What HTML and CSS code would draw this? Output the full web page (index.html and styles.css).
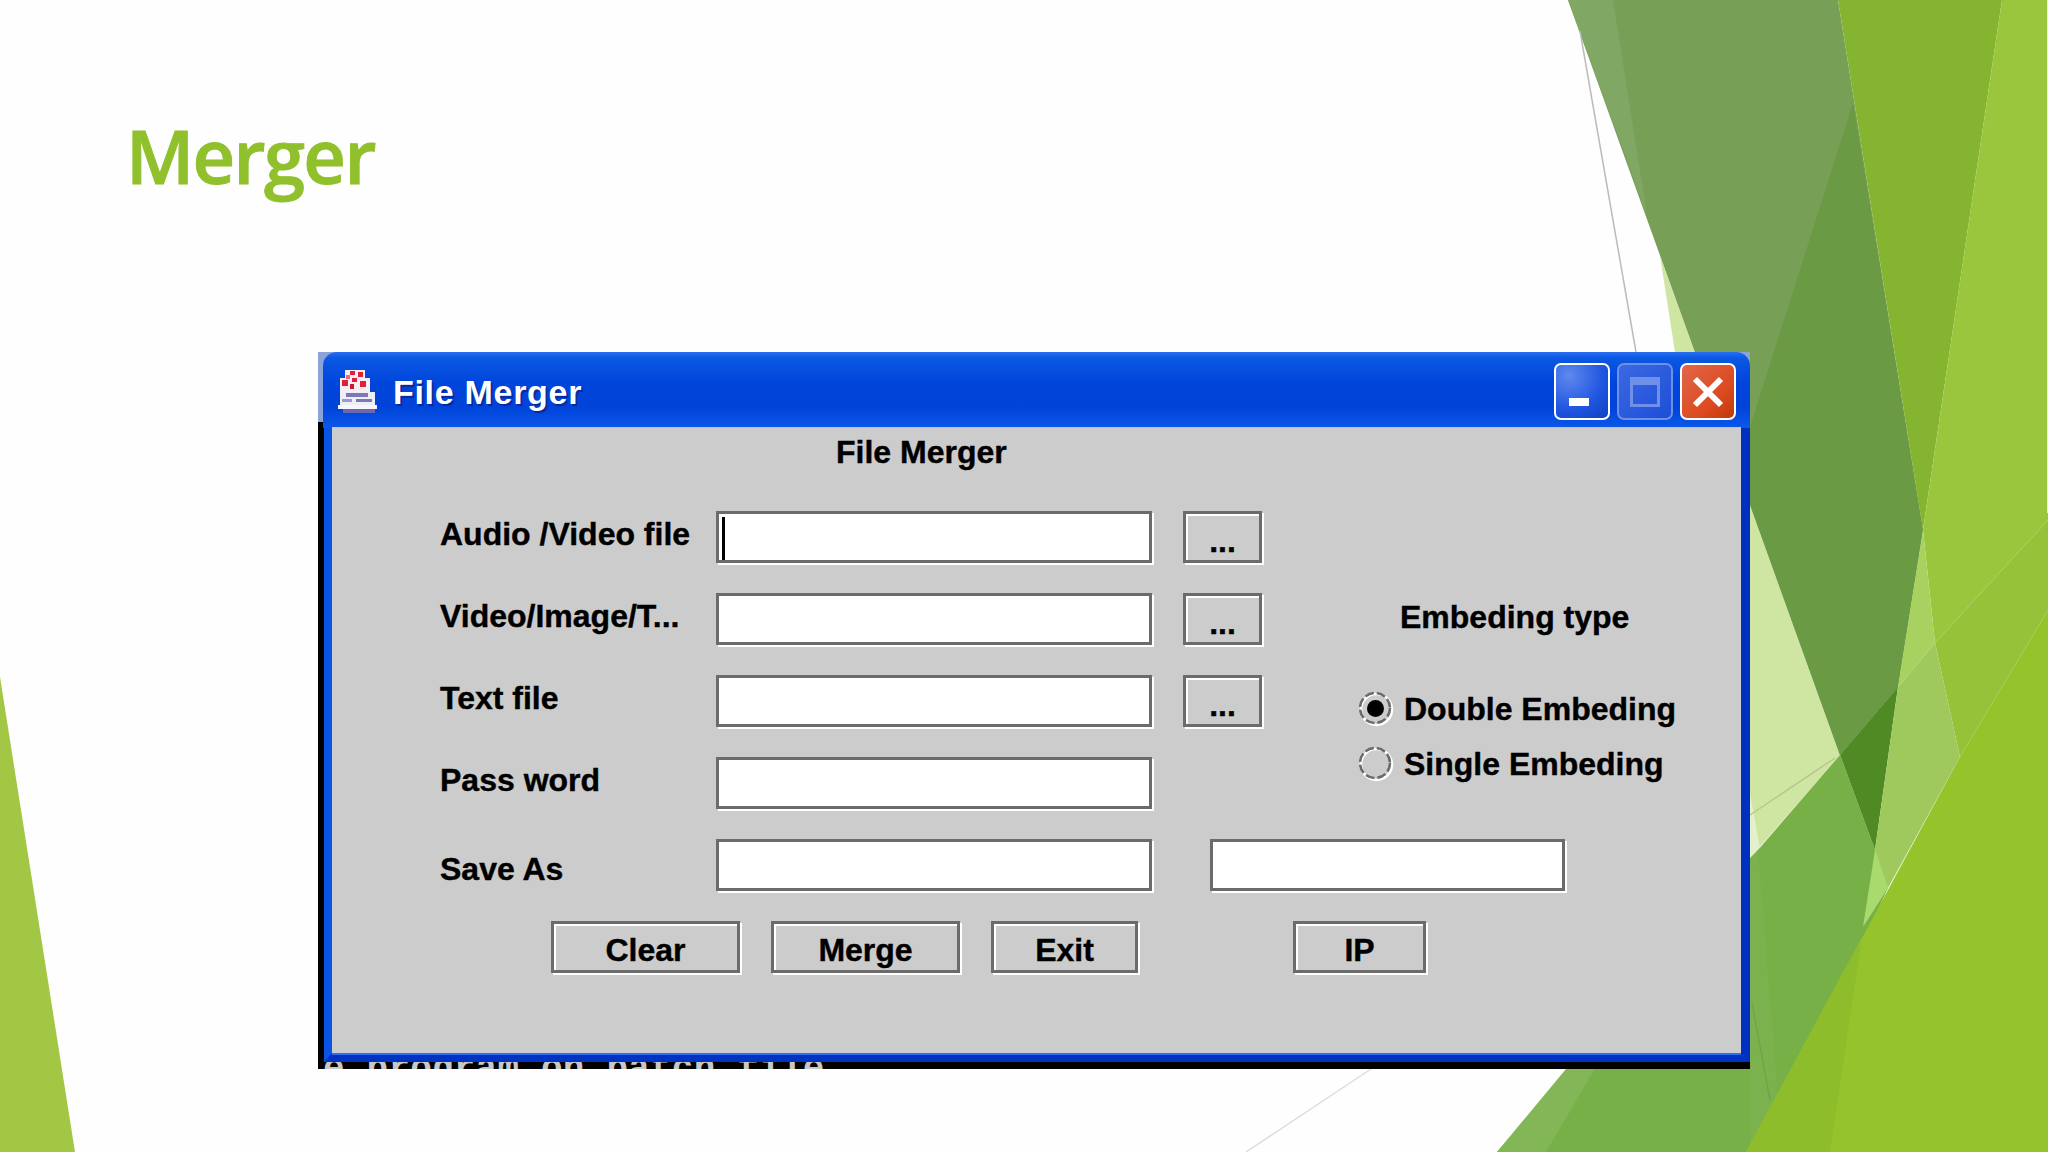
FILE: index.html
```html
<!DOCTYPE html>
<html lang="en">
<head>
    <meta charset="UTF-8">
    <meta name="viewport" content="width=device-width, initial-scale=1.0">
    <title>Merger</title>
    <link rel="stylesheet" href="styles.css">
</head>
<body>
    <div class="slide">
        <!-- Slide theme facets -->
        <svg class="facets" width="2048" height="1152" viewBox="0 0 2048 1152">
            <polygon points="0,677 75,1152 0,1152" fill="#a2c745"/>
            <polygon points="1660,256 1840,755 1600,1030 1700,512" fill="#cfe5a2"/>
            <polygon points="1750,793 1760,848 1750,859" fill="#e2f0cc"/>
            <polygon points="1840,755 1875,850 1888,888 1870,927 1752,1152 1497,1152" fill="#78b048"/>
            <polygon points="1497,1152 1546,1152 1600,1060 1566,1069" fill="#82b656"/>
            <polygon points="1750,858 1758,850 1782,1152 1750,1152" fill="#7bb24e"/>
            <polygon points="1568,0 1838,0 1923,530 1898,687 1840,755" fill="#779f56"/>
            <polygon points="1568,0 1613,0 1647,215" fill="#80a763"/>
            <polygon points="1853,103 1923,530 1898,687 1840,755 1737,468" fill="#6b9a45"/>
            <polygon points="1838,0 2002,0 1923,530" fill="#85b430"/>
            <polygon points="1840,755 1898,687 1875,850" fill="#4f8a25"/>
            <polygon points="2002,0 2048,0 2048,520 1935,643 1923,530" fill="#9ac63d"/>
            <polygon points="2048,520 2048,610 1960,757 1935,643" fill="#95c238"/>
            <polygon points="1923,530 1935,643 1898,687" fill="#a8d260"/>
            <polygon points="1898,687 1935,643 1960,757 1888,888 1875,850" fill="#9fc95d"/>
            <polygon points="1875,850 1888,888 1863,927" fill="#a9da6e"/>
            <polygon points="2048,610 2048,1152 1746,1152 1960,757" fill="#94c32c"/>
            <polygon points="1746,1152 1830,1152 1862,937" fill="#8ebd2b"/>
            <rect x="2047" y="0" width="1" height="513" fill="#e8f0d8"/>
            <line x1="1580" y1="31" x2="1636" y2="352" stroke="#bbbbbb" stroke-width="1.5"/>
            <line x1="1371" y1="1069" x2="1246" y2="1152" stroke="#dddddd" stroke-width="1.5"/>
            <line x1="1750" y1="815" x2="1835" y2="758" stroke="#b7c78f" stroke-width="1.5"/>
            <line x1="1752" y1="1003" x2="1770" y2="1100" stroke="#6fa648" stroke-width="1.5"/>
        </svg>

        <h1 class="slide-title">Merger</h1>

        <!-- Application window -->
        <div class="window">
            <div class="titlebar">
                <svg class="app-icon" width="41" height="44" viewBox="0 0 41 44">
                    <rect x="8" y="0" width="20" height="20" fill="#f6eef2"/>
                    <rect x="3" y="8" width="30" height="14" fill="#f6eef2"/>
                    <rect x="13" y="1" width="5" height="4" fill="#e0203a"/>
                    <rect x="21" y="2" width="5" height="5" fill="#e0203a"/>
                    <rect x="9" y="5" width="4" height="4" fill="#ee6a80"/>
                    <rect x="5" y="10" width="6" height="6" fill="#e0203a"/>
                    <rect x="15" y="8" width="5" height="4" fill="#e0203a"/>
                    <rect x="13" y="14" width="4" height="5" fill="#c81838"/>
                    <rect x="23" y="11" width="6" height="6" fill="#e0203a"/>
                    <rect x="3" y="22" width="35" height="13" fill="#eeeef6"/>
                    <rect x="9" y="23" width="22" height="4" fill="#7c78b8"/>
                    <rect x="5" y="29" width="10" height="3" fill="#9c98d0"/>
                    <rect x="19" y="29" width="16" height="3" fill="#7c78b8"/>
                    <rect x="1" y="35" width="39" height="4" fill="#f6f6fc"/>
                    <rect x="6" y="39" width="32" height="4" fill="#6c68b0"/>
                </svg>
                <span class="window-title">File Merger</span>
                <div class="window-controls">
                    <div class="control control-min"><span class="min-glyph"></span></div>
                    <div class="control control-max"><span class="max-glyph"></span></div>
                    <div class="control control-close">
                        <svg width="32" height="32" viewBox="0 0 32 32">
                            <path d="M3 3 L29 29 M29 3 L3 29" stroke="#fff" stroke-width="6" fill="none"/>
                        </svg>
                    </div>
                </div>
            </div>

            <div class="window-body">
                <div class="content">
                    <h2 class="form-title">File Merger</h2>
                    <form class="form-grid">
                        <label class="form-label">Audio /Video file</label>
                        <input class="field field-active" type="text">
                        <button type="button" class="btn btn-browse">...</button>

                        <!-- Embeding type panel -->
                        <div class="embed-panel">
                            <div class="embed-title">Embeding type</div>
                            <div class="radio-row">
                                <svg class="radio" width="36" height="36" viewBox="0 0 36 36">
                                    <circle cx="18.5" cy="18.5" r="15.5" fill="none" stroke="#fff" stroke-width="2.5"/>
                                    <circle cx="17" cy="17" r="15" fill="none" stroke="#6a6a6a" stroke-width="2.5" stroke-dasharray="9 3"/>
                                    <circle cx="17.5" cy="17.5" r="8.5" fill="#000"/>
                                </svg>
                                <span>Double Embeding</span>
                            </div>
                            <div class="radio-row">
                                <svg class="radio" width="36" height="36" viewBox="0 0 36 36">
                                    <circle cx="18.5" cy="18.5" r="15.5" fill="none" stroke="#fff" stroke-width="2.5"/>
                                    <circle cx="17" cy="17" r="15" fill="none" stroke="#6a6a6a" stroke-width="2.5" stroke-dasharray="9 3"/>
                                </svg>
                                <span>Single Embeding</span>
                            </div>
                        </div>

                        <label class="form-label">Video/Image/T...</label>
                        <input class="field" type="text">
                        <button type="button" class="btn btn-browse">...</button>

                        <label class="form-label">Text file</label>
                        <input class="field" type="text">
                        <button type="button" class="btn btn-browse">...</button>

                        <label class="form-label">Pass word</label>
                        <input class="field field-row4" type="text">

                        <label class="form-label form-label-low">Save As</label>
                        <input class="field" type="text">
                        <input class="field field-extra" type="text">

                        <!-- Action buttons -->
                        <div class="actions">
                            <button type="button" class="btn btn-wide">Clear</button>
                            <button type="button" class="btn btn-wide">Merge</button>
                            <button type="button" class="btn btn-exit">Exit</button>
                            <button type="button" class="btn btn-ip">IP</button>
                        </div>
                    </form>
                </div>
            </div>
            <div class="console"><span>e program on batch file</span></div>
        </div>
    </div>
</body>
</html>
```

FILE: styles.css
```css
/* General styling */
* {
    box-sizing: border-box;
}
body {
    margin: 0;
    background-color: #fff;
}
.slide {
    position: relative;
    width: 2048px;
    height: 1152px;
    overflow: hidden;
    padding-top: 106px;
    background-color: #fefefe;
}
.facets {
    position: absolute;
    top: 0;
    left: 0;
}
.slide-title {
    position: relative;
    margin: 0 0 146px 126px;
    font-family: "Open Sans", sans-serif;
    font-size: 74px;
    font-weight: 600;
    line-height: 100px;
    letter-spacing: -1.6px;
    color: #90c02c;
    -webkit-text-stroke: 1px #90c02c;
}

/* Window frame */
.window {
    position: relative;
    width: 1432px;
    height: 717px;
    margin-left: 318px;
    background: linear-gradient(#8ea2da 0, #8ea2da 70px, #000 70px);
}
.titlebar {
    display: flex;
    align-items: center;
    height: 76px;
    margin-left: 5px;
    padding: 0 14px 0 14px;
    border-radius: 14px 14px 0 0;
    background: linear-gradient(#2a6df0 0, #0b58e2 6px, #0046dc 30px, #0043d8 55px, #0a58ea 76px);
}
.app-icon {
    margin-top: 4px;
}
.window-title {
    margin: 5px 0 0 15px;
    font-family: "Liberation Sans", sans-serif;
    font-size: 34px;
    font-weight: 700;
    letter-spacing: 0.7px;
    color: #fff;
    text-shadow: 2px 2px 0 #0a2a9a;
}
.window-controls {
    display: flex;
    gap: 7px;
    margin-left: auto;
    margin-top: 3px;
}
.control {
    display: flex;
    width: 56px;
    height: 57px;
    border: 2px solid #fff;
    border-radius: 7px;
}
.control-min {
    align-items: flex-end;
    justify-content: center;
    padding: 0 6px 12px 0;
    background: radial-gradient(circle at 25% 20%, #5f88ee, #1f55e0 60%, #1040c0);
}
.min-glyph {
    width: 20px;
    height: 8px;
    background-color: #fff;
}
.control-max {
    align-items: center;
    justify-content: center;
    border-color: #6f90e8;
    background: linear-gradient(135deg, #3c68e2, #1c4fd8);
}
.max-glyph {
    width: 30px;
    height: 30px;
    border: 3px solid #6f90e8;
    border-top-width: 8px;
}
.control-close {
    align-items: center;
    justify-content: center;
    background: linear-gradient(135deg, #e2664a, #dc4a20 65%, #c03a08);
}

/* Window body */
.window-body {
    margin-left: 6px;
    border-left: 8px solid #0a54e4;
    border-right: 9px solid #0030c0;
    border-bottom: 9px solid #0033c4;
    background-color: #0033c4;
}
.content {
    height: 625px;
    background-color: #cccccc;
    box-shadow: 0 2px 0 #2a70f0, 0 -1px 0 #b8c4e0;
}
.console {
    height: 7px;
    overflow: hidden;
    padding-left: 5px;
    font-family: "Liberation Mono", monospace;
    font-size: 36px;
    font-weight: 700;
    line-height: 36px;
    letter-spacing: 0.2px;
    color: #c8c8c8;
}
.console span {
    display: block;
    margin-top: -10px;
}

/* Form */
.form-title {
    margin: 0 0 41px 0;
    padding: 6px 0 0 504px;
    font-family: "Liberation Sans", sans-serif;
    font-size: 32px;
    font-weight: 700;
    line-height: 36px;
    color: #000;
    -webkit-text-stroke: 0.4px #000;
}
.form-grid {
    display: grid;
    grid-template-columns: 276px 467px 81px 1fr;
    grid-auto-rows: 54px;
    row-gap: 28px;
    padding-left: 108px;
    font-family: "Liberation Sans", sans-serif;
    font-size: 32px;
    font-weight: 700;
    color: #000;
    -webkit-text-stroke: 0.4px #000;
}
.form-label {
    grid-column: 1;
    line-height: 46px;
}
.form-label-low {
    line-height: 60px;
}
.field {
    grid-column: 2;
    width: 436px;
    height: 52px;
    margin: 0;
    padding: 0;
    border: 3px solid #6b6b6b;
    border-radius: 0;
    outline: none;
    background-color: #fff;
    box-shadow: 2px 2px 0 #fff;
}
.field-active {
    background: linear-gradient(#000, #000) 3px 3px / 3px 43px no-repeat, #fff;
}
.field-extra {
    grid-column: 3 / 5;
    width: 355px;
    margin-left: 27px;
}
.btn {
    display: flex;
    align-items: center;
    justify-content: center;
    height: 52px;
    margin: 0;
    padding: 6px 0 0 0;
    border: 3px solid #6b6b6b;
    border-radius: 0;
    font-family: inherit;
    font-size: 32px;
    font-weight: 700;
    color: #000;
    -webkit-text-stroke: inherit;
    background-color: #cccccc;
    box-shadow: 2px 2px 0 #fff, inset 2px 2px 0 #fff;
}
.btn-browse {
    grid-column: 3;
    width: 79px;
    padding-top: 8px;
}

/* Embeding type panel */
.embed-panel {
    grid-column: 4;
    grid-row: 1 / 5;
    padding: 88px 0 0 94px;
}
.embed-title {
    margin: 0 0 56px 42px;
    line-height: 36px;
}
.radio-row {
    display: flex;
    align-items: center;
    gap: 10px;
    height: 36px;
    margin-bottom: 19px;
    white-space: nowrap;
}
.radio {
    flex-shrink: 0;
}

/* Action buttons */
.actions {
    grid-column: 1 / -1;
    display: flex;
    gap: 31px;
    padding-left: 111px;
}
.btn-wide {
    width: 189px;
}
.btn-exit {
    width: 147px;
}
.btn-ip {
    width: 133px;
    margin-left: 124px;
}
```
